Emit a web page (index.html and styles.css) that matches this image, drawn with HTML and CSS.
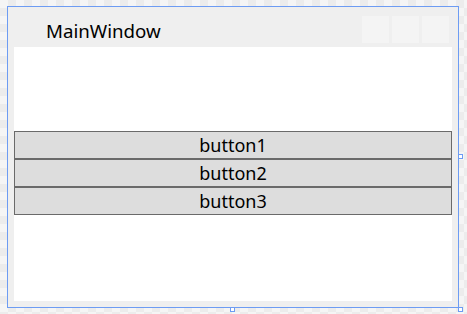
FILE: index.html
```html
<!DOCTYPE html>
<html lang="en">
<head>
  <meta charset="UTF-8" />
  <title>MainWindow</title>
  <link rel="stylesheet" href="styles.css">
</head>
<body>
  <div class="frame">
    <div class="window">
      <div class="titlebar">
        <span class="title">MainWindow</span>
        <div class="caption">
          <span class="cap-btn"></span>
          <span class="cap-btn"></span>
          <span class="cap-btn"></span>
        </div>
      </div>
      <div class="client">
        <div class="stack">
          <button class="btn">button1</button>
          <button class="btn">button2</button>
          <button class="btn">button3</button>
        </div>
      </div>
    </div>
    <span class="handle handle-right"></span>
    <span class="handle handle-bottom"></span>
    <span class="handle handle-corner"></span>
  </div>
</body>
</html>
```

FILE: styles.css
```css
html, body { height: 100%; }
body {
  margin: 0;
  font-family: "Noto Sans", "Open Sans", sans-serif;
  background-color: #f5f5f5;
  background-image:
    linear-gradient(45deg, #ececec 25%, transparent 25%, transparent 75%, #ececec 75%),
    linear-gradient(45deg, #ececec 25%, transparent 25%, transparent 75%, #ececec 75%);
  background-size: 16px 16px;
  background-position: 0 0, 8px 8px;
  overflow: hidden;
}

.frame {
  position: relative;
  width: 450px;
  height: 300px;
  margin: 6px 0 0 7px;
  border: 1px solid #6d9cf3;
}

.window {
  height: 100%;
  background: #efefef;
  display: flex;
  flex-direction: column;
  padding: 0 6px 6px 6px;
  box-sizing: border-box;
}

.titlebar {
  height: 40px;
  display: flex;
  align-items: flex-start;
  justify-content: space-between;
}
.title {
  margin: 12px 0 0 32px;
  font-size: 18.7px;
  line-height: 24px;
  color: #000;
}
.caption { display: flex; gap: 3px; margin: 9px 3px 0 0; }
.cap-btn { width: 27px; height: 27px; background: #f4f4f4; }

.client {
  flex: 1;
  background: #fff;
  padding-top: 84px;
}
.stack { display: flex; flex-direction: column; }
.btn {
  box-sizing: border-box;
  height: 28px;
  margin: 0;
  padding: 0;
  border: 1px solid #6a6a6a;
  background: #dddddd;
  font-family: inherit;
  font-size: 18px;
  line-height: 24px;
  color: #000;
}

.handle {
  position: absolute;
  width: 3px;
  height: 3px;
  border: 1px solid #6d9cf3;
  background: #fff;
}
.handle-right { right: -5px; top: 147px; }
.handle-bottom { left: 222px; bottom: -5px; }
.handle-corner { right: -5px; bottom: -5px; }
```
